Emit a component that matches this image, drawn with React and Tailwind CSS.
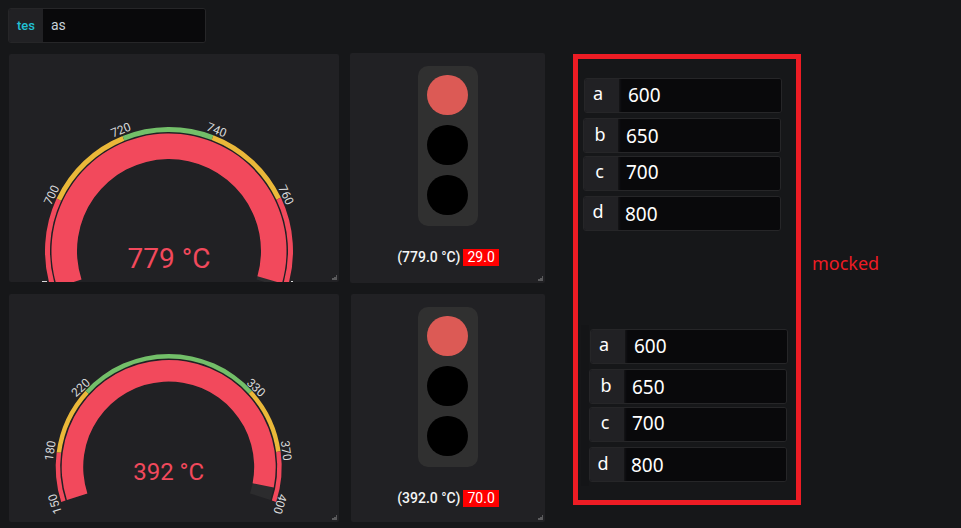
import React from 'react';

const RED = '#f2495c';
const YELLOW = '#eab839';
const GREEN = '#73bf69';

// deg is measured clockwise from the left horizontal
const point = (cx, cy, r, deg) => {
  const a = (deg * Math.PI) / 180;
  return [cx - r * Math.cos(a), cy - r * Math.sin(a)];
};

const arcPath = (cx, cy, rOut, rIn, from, to) => {
  const large = to - from > 180 ? 1 : 0;
  const [x1, y1] = point(cx, cy, rOut, from);
  const [x2, y2] = point(cx, cy, rOut, to);
  const [x3, y3] = point(cx, cy, rIn, to);
  const [x4, y4] = point(cx, cy, rIn, from);
  return `M${x1} ${y1}A${rOut} ${rOut} 0 ${large} 1 ${x2} ${y2}L${x3} ${y3}A${rIn} ${rIn} 0 ${large} 0 ${x4} ${y4}Z`;
};

function ResizeHandle() {
  return (
    <svg className="absolute right-[2px] bottom-[2px]" width="5" height="5" viewBox="0 0 5 5">
      <path d="M4 0h1v5H0V3h2V2h2z" fill="#5a5a5c" />
    </svg>
  );
}

function Gauge({ g }) {
  return (
    <div className="relative h-[228px] w-[330px] overflow-hidden rounded-[2px] bg-[#212124]">
      <svg className="block" width="330" height="228" viewBox="0 0 330 228">
        {g.bands.map((b, i) => (
          <path key={i} d={arcPath(g.cx, g.cy, g.band[0], g.band[1], b[0], b[1])} fill={b[2]} />
        ))}
        <path d={arcPath(g.cx, g.cy, g.main[0], g.main[1], -18, 198)} fill="#2c2c2e" />
        <path d={arcPath(g.cx, g.cy, g.main[0], g.main[1], -18, g.valueEnd)} fill={RED} />
        {g.labels.map((l) => (
          <text
            key={l.t}
            x={l.x}
            y={l.y}
            transform={`rotate(${l.r} ${l.x} ${l.y})`}
            textAnchor="middle"
            dominantBaseline="central"
            fill="#d8d9da"
            fontSize="12"
            style={{ fontFamily: 'Roboto, sans-serif' }}
          >
            {l.t}
          </text>
        ))}
        {/* tips of the two end labels that the panel edge cuts away */}
        {g.ticks &&
          g.ticks.map((t) => <rect key={t[0]} x={t[0]} y="227" width={t[1]} height="1" fill="#d8d9da" />)}
        <text
          x={g.cx}
          y={g.valueY}
          textAnchor="middle"
          dominantBaseline="central"
          fill={RED}
          fontSize={g.valueSize}
          style={{ fontFamily: 'Roboto, sans-serif' }}
        >
          {g.value}
        </text>
      </svg>
      <ResizeHandle />
    </div>
  );
}

function TrafficLight({ temp, score, className }) {
  return (
    <div className={`relative flex flex-col items-center rounded-[2px] bg-[#212124] ${className}`}>
      <div className="flex h-[160px] w-[60px] flex-col items-start gap-[10px] rounded-[10px] bg-[#303030] pt-[9px] pl-[9px]">
        <div className="h-[40px] w-[41px] rounded-full bg-[#dc5a55]" />
        <div className="h-[40px] w-[41px] rounded-full bg-black" />
        <div className="h-[40px] w-[41px] rounded-full bg-black" />
      </div>
      <div className="mt-[23px] flex items-center gap-[3px] font-['Roboto',sans-serif] text-[14px] leading-[17px] font-medium text-[#f4f5f5]">
        <span>({temp} °C)</span>
        <span className="bg-[#ff0000] px-[4px] font-normal text-white">{score}</span>
      </div>
      <ResizeHandle />
    </div>
  );
}

function MockRow({ label, value, className, labelClass, valueClass }) {
  return (
    <div className={`flex h-[35px] w-[198px] overflow-hidden rounded-[3px] border border-[#262628] font-['Noto_Sans',sans-serif] text-white ${className}`}>
      <div className="w-[34px] shrink-0 bg-[#212124] text-[18px]">
        <span className={`block text-center ${labelClass}`}>{label}</span>
      </div>
      <div className={`flex-1 bg-[#09090b] text-[19px] shadow-[inset_3px_0_3px_-2px_#1a1a1d] ${valueClass}`}>{value}</div>
    </div>
  );
}

const gauge1 = {
  cx: 160,
  cy: 197,
  band: [124, 119],
  main: [117.5, 92],
  valueEnd: 196,
  valueY: 204,
  valueSize: 28,
  value: '779 °C',
  ticks: [
    [33, 5],
    [282, 2],
  ],
  bands: [
    [-18, 25, RED],
    [25, 68, YELLOW],
    [68, 111, GREEN],
    [111, 154.5, YELLOW],
    [154.5, 198, RED],
  ],
  labels: [
    { t: '700', x: 42.7, y: 141, r: -64.5 },
    { t: '720', x: 112, y: 76, r: -22 },
    { t: '740', x: 207.7, y: 76, r: 22 },
    { t: '760', x: 277, y: 141, r: 64.5 },
  ],
};

const gauge2 = {
  cx: 159.7,
  cy: 173,
  band: [113, 108.5],
  main: [107, 85.5],
  valueEnd: 191,
  valueY: 178,
  valueSize: 24,
  value: '392 °C',
  bands: [
    [-18, 7.5, RED],
    [7.5, 42.5, YELLOW],
    [42.5, 137.5, GREEN],
    [137.5, 172, YELLOW],
    [172, 198, RED],
  ],
  labels: [
    { t: '150', x: 46, y: 210, r: -108 },
    { t: '180', x: 41.3, y: 156.7, r: -82 },
    { t: '220', x: 71.7, y: 93.7, r: -43 },
    { t: '330', x: 247, y: 93.7, r: 43 },
    { t: '370', x: 277, y: 156.7, r: 82 },
    { t: '400', x: 271, y: 210, r: 108 },
  ],
};

const topRows = [
  { label: 'a', value: '600', className: 'ml-[1px]', labelClass: 'pr-[8px] leading-[29px]', valueClass: 'pl-[9px] leading-[33px]' },
  { label: 'b', value: '650', className: 'mt-[5px]', labelClass: 'pr-[2px] leading-[30px]', valueClass: 'pl-[8px] leading-[35px]' },
  { label: 'c', value: '700', className: 'mt-[3px]', labelClass: 'pr-[3px] leading-[29px]', valueClass: 'pl-[8px] leading-[31px]' },
  { label: 'd', value: '800', className: 'mt-[5px]', labelClass: 'pr-[6px] leading-[29px]', valueClass: 'pl-[7px] leading-[35px]' },
];

const bottomRows = [
  { label: 'a', value: '600', className: 'ml-[1px]', labelClass: 'pr-[8px] leading-[29px]', valueClass: 'pl-[9px] leading-[33px]' },
  { label: 'b', value: '650', className: 'mt-[5px]', labelClass: 'pr-[2px] leading-[30px]', valueClass: 'pl-[8px] leading-[35px]' },
  { label: 'c', value: '700', className: 'mt-[3px]', labelClass: 'pr-[4px] leading-[29px]', valueClass: 'pl-[8px] leading-[31px]' },
  { label: 'd', value: '800', className: 'mt-[5px]', labelClass: 'pr-[8px] leading-[30px]', valueClass: 'pl-[7px] leading-[35px]' },
];

export default function App() {
  return (
    <div className="flex h-[528px] w-[961px] items-start overflow-hidden bg-[#161719]">
      <div className="ml-[8px] w-[537px] shrink-0 pt-[8px]">
        <div className="flex h-[35px] w-[198px] overflow-hidden rounded-[3px] border border-[#262628] font-['Roboto',sans-serif]">
          <div className="flex w-[34px] items-center justify-center bg-[#212124] text-[13px] font-medium text-[#22c0d4]">tes</div>
          <div className="flex-1 bg-[#09090b] pl-[8px] text-[14px] leading-[33px] text-[#c7d0d9]">as</div>
        </div>
        <div className="mt-[10px] grid grid-cols-[330px_195px] gap-x-[11px] pl-[1px]">
          <div className="mt-[1px]">
            <Gauge g={gauge1} />
          </div>
          <TrafficLight temp="779.0" score="29.0" className="h-[230px] w-[195px] pt-[13px] pl-[1px]" />
          <div className="mt-[11px]">
            <Gauge g={gauge2} />
          </div>
          <TrafficLight temp="392.0" score="70.0" className="mt-[11px] ml-[1px] h-[228px] w-[194px] pt-[13px]" />
        </div>
      </div>
      <div className="mt-[54px] ml-[28px] h-[451px] w-[228px] shrink-0 border-[5px] border-[#ed1c24]">
        <div className="mt-[19px] ml-[5px] flex flex-col">
          {topRows.map((r) => (
            <MockRow key={r.label} {...r} />
          ))}
        </div>
        <div className="mt-[94px] ml-[3px] flex">
          <div className="w-[8px] bg-[#141517]" />
          <div className="flex flex-col py-[4px]">
            {bottomRows.map((r) => (
              <MockRow key={r.label} {...r} />
            ))}
          </div>
        </div>
      </div>
      <div className="mt-[249px] ml-[11px] font-['Noto_Sans',sans-serif] text-[18px] leading-[28px] text-[#ed1c24]">mocked</div>
    </div>
  );
}
